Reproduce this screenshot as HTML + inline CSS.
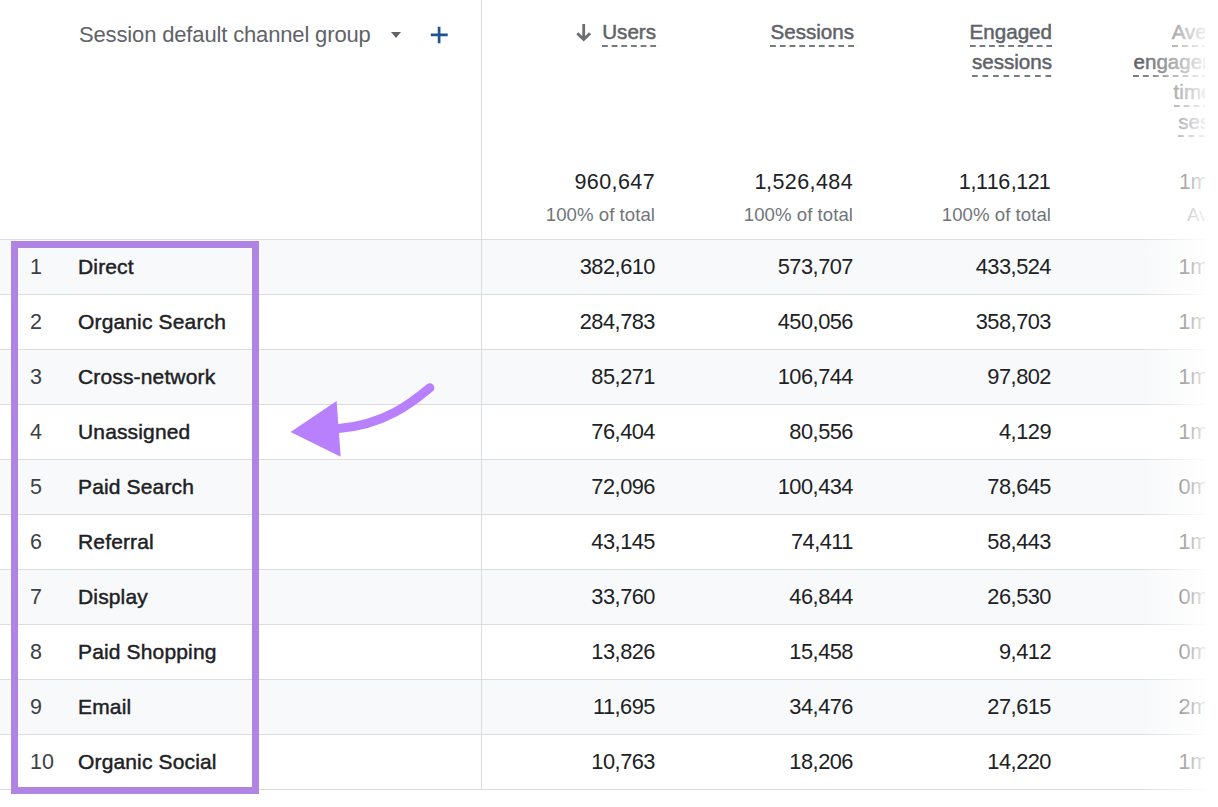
<!DOCTYPE html><html><head><meta charset="utf-8"><style>
*{margin:0;padding:0;box-sizing:border-box}
html,body{width:1218px;height:807px;overflow:hidden;background:#fff}
body{position:relative;font-family:"Liberation Sans",sans-serif;color:#202124}
.a{position:absolute;white-space:nowrap}
.hl{position:absolute;left:0;width:1218px;height:1px;background:#dadce0}
.row{position:absolute;left:0;width:1218px;height:55px}
.g{background:#f8f9fa}
.num{font-size:21.8px;line-height:55px;text-align:right;width:180px;letter-spacing:-0.5px;margin-top:-1px}
.idx{font-size:21.5px;line-height:55px;color:#3c4043}
.lbl{font-size:21px;line-height:55px;color:#202124;-webkit-text-stroke:0.45px #202124;letter-spacing:0.15px;margin-top:-1.5px}
.hdr{font-size:20.6px;line-height:30px;color:#5f6368;text-align:right;width:170px;-webkit-text-stroke:0.5px #5f6368}
.hdr span{background-image:linear-gradient(to right,#777b80 6px,transparent 6px);background-size:10px 2px;background-position:left bottom;background-repeat:round no-repeat;padding-bottom:4px;padding-right:4px;margin-right:-4px}
.tot{font-size:21.5px;line-height:30px;text-align:right;width:180px;color:#202124;letter-spacing:0.4px}
.o{margin:0 -0.8px}.o2{margin-left:-1.5px}
.pct{font-size:18.6px;line-height:30px;text-align:right;width:180px;color:#70757a;letter-spacing:0.05px}
</style></head><body><div class="row g" style="top:240px"></div>
<div class="row" style="top:295px"></div>
<div class="row g" style="top:350px"></div>
<div class="row" style="top:405px"></div>
<div class="row g" style="top:460px"></div>
<div class="row" style="top:515px"></div>
<div class="row g" style="top:570px"></div>
<div class="row" style="top:625px"></div>
<div class="row g" style="top:680px"></div>
<div class="row" style="top:735px"></div>
<div class="hl" style="top:239px"></div>
<div class="hl" style="top:294px"></div>
<div class="hl" style="top:349px"></div>
<div class="hl" style="top:404px"></div>
<div class="hl" style="top:459px"></div>
<div class="hl" style="top:514px"></div>
<div class="hl" style="top:569px"></div>
<div class="hl" style="top:624px"></div>
<div class="hl" style="top:679px"></div>
<div class="hl" style="top:734px"></div>
<div class="hl" style="top:789px"></div>
<div class="a" style="left:481px;top:0;width:1px;height:790px;background:#dadce0"></div>
<div class="a" style="left:79px;top:20.48px;font-size:22px;line-height:30px;color:#5f6368;letter-spacing:-0.15px">Session default channel group</div>
<svg class="a" style="left:389px;top:30px" width="14" height="10" viewBox="0 0 14 10"><path d="M2 2 L12 2 L7 8 Z" fill="#5f6368"/></svg>
<svg class="a" style="left:428px;top:24px" width="22" height="22" viewBox="0 0 22 22"><path d="M2.8 10.9 H19.7 M11.1 2.7 V19.2" stroke="#21538f" stroke-width="2.7" fill="none"/></svg>
<svg class="a" style="left:574px;top:22px" width="20" height="22" viewBox="0 0 20 22"><path d="M9.7 2 V17.5 M3.3 11.2 L9.7 17.6 L16.1 11.2" stroke="#6b6f74" stroke-width="2.8" fill="none"/></svg>
<div class="a hdr" style="left:486px;top:16.66px"><span>Users</span></div>
<div class="a hdr" style="left:684px;top:16.66px"><span>Sessions</span></div>
<div class="a hdr" style="left:882px;top:16.66px"><span>Engaged</span></div>
<div class="a hdr" style="left:882px;top:46.86px"><span>sessions</span></div>
<div class="a hdr" style="left:1078px;top:16.66px"><span>Average</span></div>
<div class="a hdr" style="left:1078px;top:46.86px"><span>engagement</span></div>
<div class="a hdr" style="left:1078px;top:77.06px"><span>time per</span></div>
<div class="a hdr" style="left:1078px;top:107.26px"><span>session</span></div>
<div class="a tot" style="left:475px;top:166.65px">960,647</div>
<div class="a pct" style="left:475px;top:199.56px">100% of total</div>
<div class="a tot" style="left:673px;top:166.65px"><span class="o">1</span>,526,484</div>
<div class="a pct" style="left:673px;top:199.56px">100% of total</div>
<div class="a tot" style="left:871px;top:166.65px"><span class="o">1</span>,<span class="o">1</span><span class="o">1</span>6,<span class="o">1</span>2<span class="o2">1</span></div>
<div class="a pct" style="left:871px;top:199.56px">100% of total</div>
<div class="a tot" style="left:1071px;top:166.65px"><span class="o">1</span>m 04s</div>
<div class="a pct" style="left:1071px;top:199.56px">Avg 0%</div>
<div class="a idx" style="left:30px;top:240px">1</div>
<div class="a lbl" style="left:78px;top:240px">Direct</div>
<div class="a num" style="left:475px;top:240px">382,610</div>
<div class="a num" style="left:673px;top:240px">573,707</div>
<div class="a num" style="left:871px;top:240px">433,524</div>
<div class="a num" style="left:1067px;top:240px">1m 02s</div>
<div class="a idx" style="left:30px;top:295px">2</div>
<div class="a lbl" style="left:78px;top:295px">Organic Search</div>
<div class="a num" style="left:475px;top:295px">284,783</div>
<div class="a num" style="left:673px;top:295px">450,056</div>
<div class="a num" style="left:871px;top:295px">358,703</div>
<div class="a num" style="left:1067px;top:295px">1m 12s</div>
<div class="a idx" style="left:30px;top:350px">3</div>
<div class="a lbl" style="left:78px;top:350px">Cross-network</div>
<div class="a num" style="left:475px;top:350px">85,271</div>
<div class="a num" style="left:673px;top:350px">106,744</div>
<div class="a num" style="left:871px;top:350px">97,802</div>
<div class="a num" style="left:1067px;top:350px">1m 03s</div>
<div class="a idx" style="left:30px;top:405px">4</div>
<div class="a lbl" style="left:78px;top:405px">Unassigned</div>
<div class="a num" style="left:475px;top:405px">76,404</div>
<div class="a num" style="left:673px;top:405px">80,556</div>
<div class="a num" style="left:871px;top:405px">4,129</div>
<div class="a num" style="left:1067px;top:405px">1m 10s</div>
<div class="a idx" style="left:30px;top:460px">5</div>
<div class="a lbl" style="left:78px;top:460px">Paid Search</div>
<div class="a num" style="left:475px;top:460px">72,096</div>
<div class="a num" style="left:673px;top:460px">100,434</div>
<div class="a num" style="left:871px;top:460px">78,645</div>
<div class="a num" style="left:1067px;top:460px">0m 51s</div>
<div class="a idx" style="left:30px;top:515px">6</div>
<div class="a lbl" style="left:78px;top:515px">Referral</div>
<div class="a num" style="left:475px;top:515px">43,145</div>
<div class="a num" style="left:673px;top:515px">74,411</div>
<div class="a num" style="left:871px;top:515px">58,443</div>
<div class="a num" style="left:1067px;top:515px">1m 21s</div>
<div class="a idx" style="left:30px;top:570px">7</div>
<div class="a lbl" style="left:78px;top:570px">Display</div>
<div class="a num" style="left:475px;top:570px">33,760</div>
<div class="a num" style="left:673px;top:570px">46,844</div>
<div class="a num" style="left:871px;top:570px">26,530</div>
<div class="a num" style="left:1067px;top:570px">0m 32s</div>
<div class="a idx" style="left:30px;top:625px">8</div>
<div class="a lbl" style="left:78px;top:625px">Paid Shopping</div>
<div class="a num" style="left:475px;top:625px">13,826</div>
<div class="a num" style="left:673px;top:625px">15,458</div>
<div class="a num" style="left:871px;top:625px">9,412</div>
<div class="a num" style="left:1067px;top:625px">0m 47s</div>
<div class="a idx" style="left:30px;top:680px">9</div>
<div class="a lbl" style="left:78px;top:680px">Email</div>
<div class="a num" style="left:475px;top:680px">11,695</div>
<div class="a num" style="left:673px;top:680px">34,476</div>
<div class="a num" style="left:871px;top:680px">27,615</div>
<div class="a num" style="left:1067px;top:680px">2m 05s</div>
<div class="a idx" style="left:30px;top:735px">10</div>
<div class="a lbl" style="left:78px;top:735px">Organic Social</div>
<div class="a num" style="left:475px;top:735px">10,763</div>
<div class="a num" style="left:673px;top:735px">18,206</div>
<div class="a num" style="left:871px;top:735px">14,220</div>
<div class="a num" style="left:1067px;top:735px">1m 14s</div>
<div class="a" style="left:1140px;top:0;width:78px;height:807px;background:linear-gradient(to right,rgba(255,255,255,0) 0px,rgba(255,255,255,.9) 65px,#fff 65px,#fff 78px)"></div>
<div class="a" style="left:11px;top:241px;width:248px;height:553px;border:7px solid #b084e2"></div>
<svg class="a" style="left:0;top:0" width="1218" height="807" viewBox="0 0 1218 807"><path d="M429.9 387.8 C414 401 386 425 337 428.8" stroke="#b880fc" stroke-width="9" stroke-linecap="round" fill="none"/><path d="M290.6 431.9 L336.6 401 L340.7 456.7 Z" fill="#b880fc"/></svg></body></html>
